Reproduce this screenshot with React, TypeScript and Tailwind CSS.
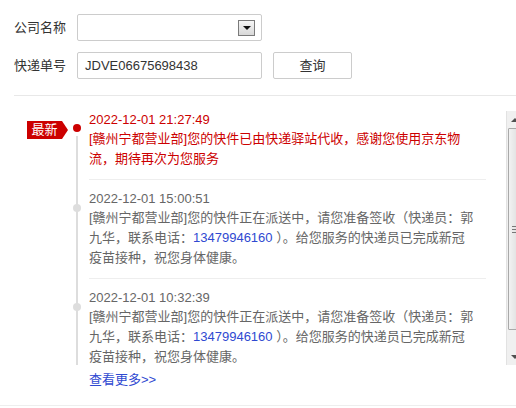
export default function App() {
  const items = [
    {
      time: "2022-12-01 21:27:49",
      latest: true,
      lines: [
        <>[赣州宁都营业部]您的快件已由快递驿站代收，感谢您使用京东物</>,
        <>流，期待再次为您服务</>,
      ],
    },
    {
      time: "2022-12-01 15:00:51",
      latest: false,
      lines: [
        <>[赣州宁都营业部]您的快件正在派送中，请您准备签收（快递员：郭</>,
        <>
          九华，联系电话：<span className="text-[#2f49d1]">13479946160</span> ）。给您服务的快递员已完成新冠
        </>,
        <>疫苗接种，祝您身体健康。</>,
      ],
    },
    {
      time: "2022-12-01 10:32:39",
      latest: false,
      lines: [
        <>[赣州宁都营业部]您的快件正在派送中，请您准备签收（快递员：郭</>,
        <>
          九华，联系电话：<span className="text-[#2f49d1]">13479946160</span> ）。给您服务的快递员已完成新冠
        </>,
        <>疫苗接种，祝您身体健康。</>,
      ],
    },
  ];

  return (
    <div className="w-[516px] h-[408px] overflow-hidden bg-white font-['Liberation_Sans','Noto_Sans_CJK_SC',sans-serif] text-[13px] text-[#333]">
      {/* query form */}
      <div className="pl-[14px] pt-[14px]">
        <div className="flex items-center">
          <span className="w-[63px] leading-[20px]">公司名称</span>
          <div className="flex h-[27px] w-[185px] items-center justify-end rounded-[2px] border border-[#cccccc] bg-white pr-[6px]">
            <div className="flex h-[16px] w-[17px] items-center justify-center border border-[#7a7a7a] bg-gradient-to-b from-[#f6f6f6] to-[#d8d8d8]">
              <div className="h-0 w-0 border-x-[4px] border-t-[4px] border-x-transparent border-t-[#111]" />
            </div>
          </div>
        </div>

        <div className="mt-[11px] flex items-center">
          <span className="w-[63px] leading-[20px]">快递单号</span>
          <div className="flex h-[27px] w-[185px] items-center rounded-[2px] border border-[#cccccc] bg-white pl-[7px] text-[#333]">
            JDVE06675698438
          </div>
          <button className="ml-[11px] h-[27px] w-[79px] rounded-[2px] border border-[#cccccc] bg-white text-[13px] text-[#333]">
            查询
          </button>
        </div>

        <div className="mt-[16px] h-px bg-[#e8e8e8]" />
      </div>

      {/* timeline */}
      <div className="mt-[15px] flex h-[254px] overflow-hidden">
        <div className="relative flex-1">
          <div className="absolute left-[76px] top-[25px] bottom-0 w-[2px] bg-[#dddddd]" />

          {items.map((item, i) => (
            <div key={i} className="relative">
              {item.latest && (
                <div className="absolute left-[27px] top-[10px] flex items-center">
                  <div className="flex h-[18px] w-[35px] items-center justify-center bg-[#cc0000] text-[13px] leading-[18px] text-white">
                    最新
                  </div>
                  <div className="h-0 w-0 border-y-[9px] border-l-[6px] border-y-transparent border-l-[#cc0000]" />
                </div>
              )}
              <div
                className={
                  item.latest
                    ? "absolute left-[73px] top-[13px] h-[8px] w-[8px] rounded-full bg-[#cc0000]"
                    : "absolute left-[73px] top-[24px] h-[8px] w-[8px] rounded-full bg-[#dddddd]"
                }
              />
              <div
                className={
                  "ml-[89px] mr-[20px] " +
                  (i === 0 ? "pt-0 pb-[10px] " : "pt-[10px] ") +
                  (i < items.length - 1 ? "border-b border-[#eeeeee] pb-[10px]" : "pb-0")
                }
              >
                <div
                  className={
                    "text-[13px] leading-[18px] " +
                    (item.latest ? "text-[#cc0000]" : "text-[#666666]")
                  }
                >
                  {item.time}
                </div>
                <div
                  className={
                    "whitespace-nowrap text-[13px] leading-[20px] " +
                    (item.latest ? "text-[#cc0000]" : "text-[#666666]")
                  }
                >
                  {item.lines.map((l, j) => (
                    <div key={j}>{l}</div>
                  ))}
                </div>
              </div>
            </div>
          ))}
        </div>

        {/* scrollbar */}
        <div className="mr-[-7px] flex w-[17px] flex-col border-l border-[#e2e2e2] bg-[#f0f0f0]">
          <div className="flex h-[17px] items-center justify-center">
            <div className="h-0 w-0 border-x-[4px] border-b-[4px] border-x-transparent border-b-[#505050]" />
          </div>
          <div className="mx-[1px] flex h-[202px] flex-col items-center justify-center gap-[2px] rounded-[1px] border border-[#a9a9a9] bg-gradient-to-r from-[#f2f2f2] to-[#dadada]">
            <div className="h-px w-[7px] bg-[#777]" />
            <div className="h-px w-[7px] bg-[#777]" />
            <div className="h-px w-[7px] bg-[#777]" />
          </div>
          <div className="flex-1" />
          <div className="flex h-[17px] items-center justify-center">
            <div className="h-0 w-0 border-x-[4px] border-t-[4px] border-x-transparent border-t-[#505050]" />
          </div>
        </div>
      </div>

      <div className="mt-[5px] pl-[89px] text-[13px] leading-[20px] text-[#2f49d1]">查看更多&gt;&gt;</div>

      <div className="mt-[15px] h-px bg-[#eeeeee]" />
    </div>
  );
}
